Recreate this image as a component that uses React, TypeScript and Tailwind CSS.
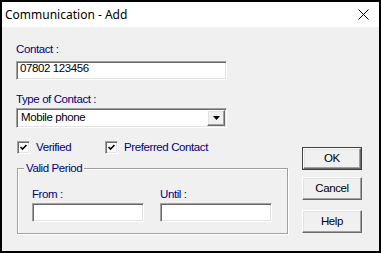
import React from "react";

const sunken =
  "border border-t-[#a0a0a0] border-l-[#a0a0a0] border-b-white border-r-white shadow-[inset_1px_1px_0_#696969,inset_-1px_-1px_0_#e3e3e3] bg-white";
const raised =
  "border border-t-white border-l-white border-b-[#696969] border-r-[#696969] shadow-[inset_-1px_-1px_0_#a0a0a0,inset_1px_1px_0_#e3e3e3] bg-[#f0f0f0]";

function Check({ label }: { label: string }) {
  return (
    <div className="flex items-center h-[13px]">
      <div className={`w-[13px] h-[13px] ${sunken} flex items-center justify-center`}>
        <svg width="9" height="9" viewBox="0 0 9 9">
          <path d="M1.5 4 L3.5 6 L7.5 2" stroke="#000" strokeWidth="1.6" fill="none" />
        </svg>
      </div>
      <span className="ml-[6px] text-[#000080] leading-[13px]">{label}</span>
    </div>
  );
}

function Btn({ label, isDefault }: { label: string; isDefault?: boolean }) {
  const inner = (
    <div className={`${raised} h-full flex items-center justify-center text-black leading-[13px]`}>{label}</div>
  );
  return isDefault ? (
    <div className="w-[60px] h-[23px] border border-[#404040]">{inner}</div>
  ) : (
    <div className="w-[60px] h-[23px]">{inner}</div>
  );
}

export default function App() {
  return (
    <div className="w-[381px] h-[253px] border-2 border-black flex flex-col font-['Liberation_Sans',Arial,sans-serif] text-[11.5px] tracking-[-0.4px]">
      <div className="h-[25px] bg-white flex items-center justify-between pl-[3px] pr-[10px] shrink-0">
        <span className="font-['Segoe_UI','Noto_Sans',sans-serif] text-[12px] tracking-normal text-black">
          Communication - Add
        </span>
        <svg width="11" height="11" viewBox="0 0 11 11">
          <path d="M0.5 0.5 L10.5 10.5 M10.5 0.5 L0.5 10.5" stroke="#000" strokeWidth="1" />
        </svg>
      </div>
      <div className="flex-1 bg-[#f0f0f0] flex">
        <div className="ml-[14px] w-[272px] flex flex-col">
          <div className="mt-[15px] leading-[14px] text-[#000080]">Contact :</div>
          <div className={`mt-[5px] w-[211px] h-[19px] ${sunken} pl-[3px] leading-[13px] text-black`}>07802 123456</div>
          <div className="mt-[12px] leading-[14px] text-[#000080]">Type of Contact :</div>
          <div className={`mt-[2px] w-[211px] h-[20px] ${sunken} flex justify-between`}>
            <span className="pl-[4px] pt-[2px] leading-[13px] text-black">Mobile phone</span>
            <div className={`w-[18px] h-[16px] mt-[1px] mr-[1px] ${raised} flex items-center justify-center`}>
              <svg width="7" height="4" viewBox="0 0 7 4">
                <path d="M0 0 H7 L3.5 4 Z" fill="#000" />
              </svg>
            </div>
          </div>
          <div className="mt-[13px] ml-[1px] flex">
            <div className="w-[88px]">
              <Check label="Verified" />
            </div>
            <Check label="Preferred Contact" />
          </div>
          <div className="relative mt-[14px] ml-[1px] w-[271px] h-[66px] border border-[#a0a0a0] shadow-[inset_1px_1px_0_#fff,1px_1px_0_#fff] pl-[14px] pt-[19px] flex gap-[16px]">
            <span className="absolute left-[6px] top-[-7px] px-[2px] bg-[#f0f0f0] leading-[13px] text-[#000080]">
              Valid Period
            </span>
            <div className="flex flex-col">
              <div className="leading-[13px] text-[#000080]">From :</div>
              <div className={`mt-[2px] w-[112px] h-[19px] ${sunken}`} />
            </div>
            <div className="flex flex-col">
              <div className="leading-[13px] text-[#000080]">Until :</div>
              <div className={`mt-[2px] w-[112px] h-[19px] ${sunken}`} />
            </div>
          </div>
        </div>
        <div className="ml-[14px] pt-[120px] flex flex-col">
          <Btn label="OK" isDefault />
          <div className="mt-[7px]">
            <Btn label="Cancel" />
          </div>
          <div className="mt-[10px]">
            <Btn label="Help" />
          </div>
        </div>
      </div>
    </div>
  );
}
